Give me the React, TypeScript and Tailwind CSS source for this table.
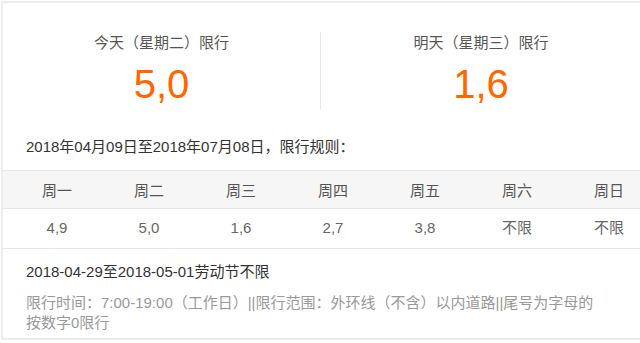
import React from "react";

const font = { fontFamily: '"Liberation Sans", "Noto Sans CJK SC", sans-serif' };

const days = ["周一", "周二", "周三", "周四", "周五", "周六", "周日"];
const vals = ["4,9", "5,0", "1,6", "2,7", "3,8", "不限", "不限"];

export default function App() {
  return (
    <div className="w-[640px] h-[343px] overflow-hidden bg-white" style={font}>
      <div className="ml-px mt-px w-[700px] border-2 border-[#ededed] bg-white">
        <div className="flex pt-[29px] h-[107px]">
          <div className="w-[317px] flex flex-col items-center">
            <div className="text-[15px] leading-[22px] text-[#555]">今天（星期二）限行</div>
            <div className="mt-[6px] text-[40px] leading-[48px] text-[#ff6600]">5,0</div>
          </div>
          <div className="w-px h-[78px] bg-[#e8e8e8]" />
          <div className="w-[320px] flex flex-col items-center">
            <div className="text-[15px] leading-[22px] text-[#555]">明天（星期三）限行</div>
            <div className="mt-[6px] text-[40px] leading-[48px] text-[#ff6600]">1,6</div>
          </div>
        </div>
        <div className="pl-[23px] mt-[26px] mb-[12px] text-[15px] leading-[22px] text-[#333]">
          2018年04月09日至2018年07月08日，限行规则：
        </div>
        <div className="w-[644px]">
          <div className="grid grid-cols-[repeat(7,92px)] h-[39px] border-y border-[#e6e6e6] bg-[#f6f6f6] items-center">
            {days.map((d) => (
              <div key={d} className="pl-4 pt-[3px] text-center text-[15px] text-[#555]">
                {d}
              </div>
            ))}
          </div>
          <div className="grid grid-cols-[repeat(7,92px)] h-[40px] border-b border-[#e6e6e6] items-center">
            {vals.map((v, i) => (
              <div key={i} className="pl-4 text-center text-[15px] text-[#666]">
                {v}
              </div>
            ))}
          </div>
        </div>
        <div className="pl-[23px] pb-[5px]">
          <div className="mt-[12px] text-[15px] leading-[22px] text-[#333]">
            2018-04-29至2018-05-01劳动节不限
          </div>
          <div className="mt-[10px] text-[15px] leading-[20px] text-[#999] whitespace-nowrap">
            限行时间：7:00-19:00（工作日）||限行范围：外环线（不含）以内道路||尾号为字母的
            <br />
            按数字0限行
          </div>
        </div>
      </div>
    </div>
  );
}
